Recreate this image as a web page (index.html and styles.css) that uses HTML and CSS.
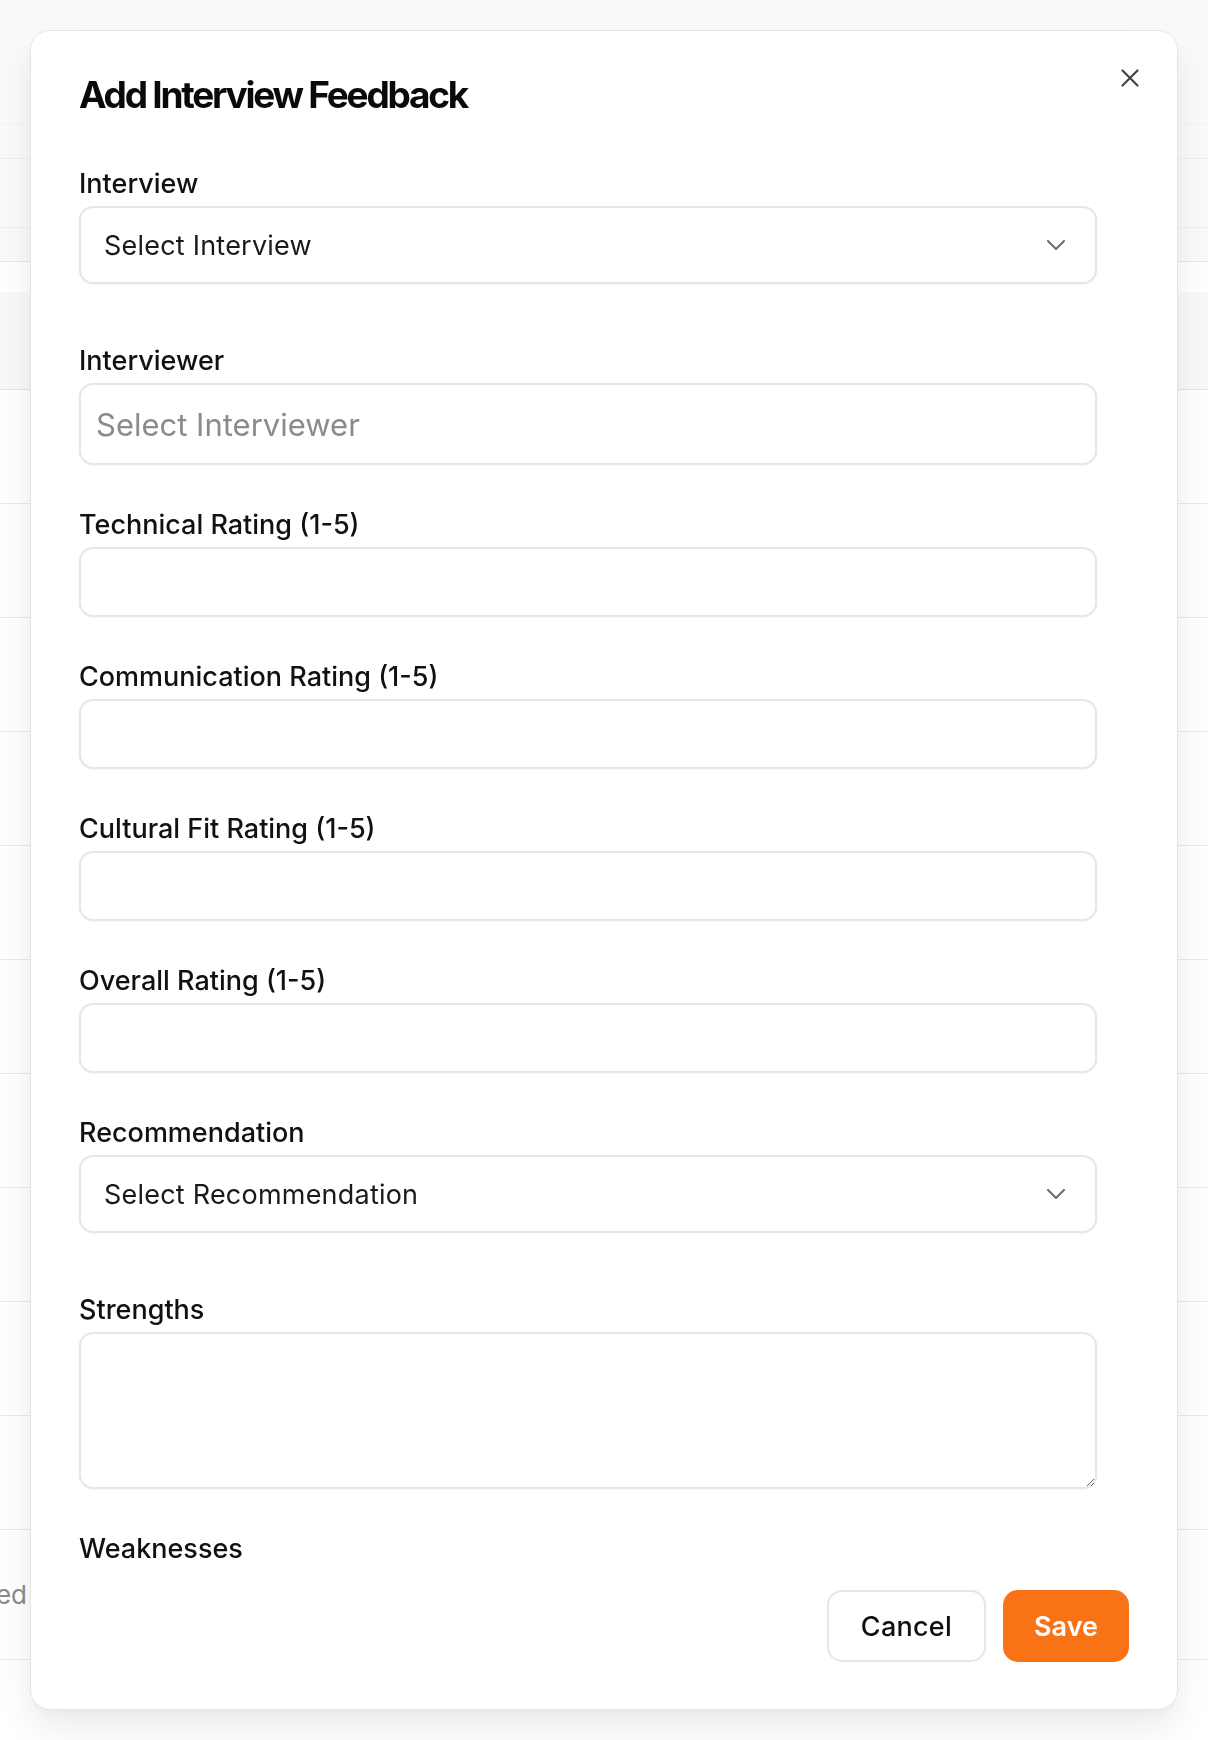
FILE: index.html
```html
<!DOCTYPE html>
<html lang="en">
<head>
<meta charset="utf-8">
<title>Add Interview Feedback</title>
<link rel="stylesheet" href="styles.css">
</head>
<body>
<div class="page">
  <div class="bg-top">
    <div class="bg-line bg-h1"></div>
    <div class="bg-line bg-h2"></div>
    <div class="bg-line bg-h3"></div>
    <div class="bg-line bg-h4"></div>
  </div>
  <div class="bg-gap"></div>
  <div class="bg-head"></div>
  <div class="bg-row"></div>
  <div class="bg-row"></div>
  <div class="bg-row"></div>
  <div class="bg-row"></div>
  <div class="bg-row"></div>
  <div class="bg-row"></div>
  <div class="bg-row"></div>
  <div class="bg-row"></div>
  <div class="bg-row"></div>
  <div class="bg-row"></div>
  <div class="bg-row bg-row-last">
    <div class="bg-cell"><span class="bg-text">Completed</span></div>
  </div>
</div>

<div class="modal" role="dialog" aria-labelledby="modal-title">
  <div class="modal-header">
    <h2 id="modal-title" class="modal-title">Add Interview Feedback</h2>
  </div>
  <button class="close-btn" type="button" aria-label="Close">
    <svg width="18" height="18" viewBox="0 0 18 18" fill="none" stroke="#444" stroke-width="2.2" stroke-linecap="round">
      <path d="M1.5 1.5l15 15M16.5 1.5l-15 15"/>
    </svg>
  </button>

  <div class="modal-body">
    <div class="field field-select">
      <label class="label">Interview</label>
      <div class="select" role="combobox">
        <span class="select-text">Select Interview</span>
        <svg class="chevron" width="18" height="10" viewBox="0 0 18 10" fill="none" stroke="#6b6b6b" stroke-width="2" stroke-linecap="round" stroke-linejoin="round">
          <path d="M1 1l8 8 8-8"/>
        </svg>
      </div>
    </div>

    <div class="field">
      <label class="label">Interviewer</label>
      <input class="input input-text" type="text" placeholder="Select Interviewer">
    </div>

    <div class="field">
      <label class="label">Technical Rating (1-5)</label>
      <input class="input input-num" type="number" min="1" max="5">
    </div>

    <div class="field">
      <label class="label">Communication Rating (1-5)</label>
      <input class="input input-num" type="number" min="1" max="5">
    </div>

    <div class="field">
      <label class="label">Cultural Fit Rating (1-5)</label>
      <input class="input input-num" type="number" min="1" max="5">
    </div>

    <div class="field">
      <label class="label">Overall Rating (1-5)</label>
      <input class="input input-num" type="number" min="1" max="5">
    </div>

    <div class="field field-select">
      <label class="label">Recommendation</label>
      <div class="select" role="combobox">
        <span class="select-text">Select Recommendation</span>
        <svg class="chevron" width="18" height="10" viewBox="0 0 18 10" fill="none" stroke="#6b6b6b" stroke-width="2" stroke-linecap="round" stroke-linejoin="round">
          <path d="M1 1l8 8 8-8"/>
        </svg>
      </div>
    </div>

    <div class="field">
      <label class="label">Strengths</label>
      <textarea class="textarea"></textarea>
    </div>

    <div class="field">
      <label class="label">Weaknesses</label>
      <textarea class="textarea"></textarea>
    </div>
  </div>

  <div class="modal-footer">
    <button class="btn btn-cancel" type="button">Cancel</button>
    <button class="btn btn-save" type="button">Save</button>
  </div>
</div>
</body>
</html>
```

FILE: styles.css
```css
* { box-sizing: border-box; }

html, body {
  margin: 0;
  padding: 0;
}

body {
  background: #ffffff;
  font-family: Inter, "Noto Sans", "Liberation Sans", sans-serif;
  color: #111111;
  width: 1208px;
  height: 1740px;
  overflow: hidden;
}

/* ---------- background page ---------- */
.page {
  width: 1208px;
}

.bg-top {
  background: #fafafa;
}

.bg-line {
  border-bottom: 1px solid #efefef;
}

.bg-h1 { height: 124px; border-bottom-color: #f3f3f3; }
.bg-h2 { height: 35px; }
.bg-h3 { height: 69px; }
.bg-h4 { height: 34px; border-bottom-color: #e6e6e6; }

.bg-gap {
  height: 30px;
}

.bg-head {
  height: 98px;
  background: #f7f8fa;
  border-bottom: 1px solid #e6e6e6;
}

.bg-row {
  height: 114px;
  border-bottom: 1px solid #e8e8e8;
}

.bg-row-last {
  height: 130px;
  display: flex;
  align-items: center;
}

.bg-cell {
  width: 27px;
  display: flex;
  justify-content: flex-end;
}

.bg-text {
  white-space: nowrap;
  font-size: 26px;
  color: #8a8a8a;
}

/* ---------- modal ---------- */
.modal {
  position: fixed;
  left: 30px;
  top: 30px;
  width: 1148px;
  height: 1680px;
  background: #ffffff;
  border: 1px solid #e4e4e4;
  border-radius: 20px;
  box-shadow: 0 18px 36px rgba(0, 0, 0, 0.08), 0 4px 10px rgba(0, 0, 0, 0.03);
  display: flex;
  flex-direction: column;
}

.modal-header {
  padding: 41px 80px 0 48px;
}

.modal-title {
  margin: 0;
  font-size: 37px;
  line-height: 46px;
  font-weight: 700;
  letter-spacing: -0.06em;
  color: #0a0a0a;
}

.close-btn {
  position: absolute;
  top: 27px;
  right: 27px;
  width: 40px;
  height: 40px;
  padding: 0;
  border: none;
  background: transparent;
  display: flex;
  align-items: center;
  justify-content: center;
  cursor: pointer;
}

.modal-body {
  flex: 1;
  min-height: 0;
  overflow: hidden;
  padding: 50px 80px 0 48px;
}

.field {
  margin-bottom: 44px;
}

.field-select {
  margin-bottom: 61px;
}

.label {
  display: block;
  font-size: 27px;
  line-height: 32px;
  font-weight: 500;
  letter-spacing: 0;
  color: #111111;
  margin-bottom: 6px;
}

.select {
  height: 78px;
  border: 2px solid #e6e6e6;
  border-radius: 14px;
  display: flex;
  align-items: center;
  justify-content: space-between;
  padding: 0 30px 0 23px;
  box-shadow: 0 1px 2px rgba(0, 0, 0, 0.03);
}

.select-text {
  font-size: 27px;
  letter-spacing: 0.008em;
  color: #1a1a1a;
}

.chevron {
  display: block;
}

.input {
  display: block;
  width: 100%;
  border: 2px solid #e6e6e6;
  border-radius: 14px;
  background: #ffffff;
  font-family: inherit;
  color: #1a1a1a;
  outline: none;
  box-shadow: 0 1px 2px rgba(0, 0, 0, 0.04);
}

.input-text {
  height: 82px;
  padding: 0 15px;
  font-size: 31px;
}

.input-text::placeholder {
  color: #8b8b8b;
}

.input-num {
  height: 70px;
  padding: 0 16px;
  font-size: 26px;
}

.textarea {
  display: block;
  width: 100%;
  height: 157px;
  border: 2px solid #e6e6e6;
  border-radius: 14px;
  font-family: inherit;
  font-size: 26px;
  padding: 12px 16px;
  outline: none;
  resize: vertical;
  box-shadow: 0 1px 2px rgba(0, 0, 0, 0.04);
}

/* ---------- footer ---------- */
.modal-footer {
  display: flex;
  justify-content: flex-end;
  gap: 17px;
  padding: 24px 48px 47px 48px;
}

.btn {
  height: 72px;
  font-family: inherit;
  font-size: 27px;
  border-radius: 15px;
  cursor: pointer;
}

.btn-cancel {
  background: #ffffff;
  border: 2px solid #e6e6e6;
  color: #0f0f0f;
  font-weight: 500;
  letter-spacing: 0.01em;
  padding: 0 32px;
}

.btn-save {
  background: #f97316;
  border: none;
  color: #ffffff;
  font-weight: 600;
  padding: 0 31px;
}
```
